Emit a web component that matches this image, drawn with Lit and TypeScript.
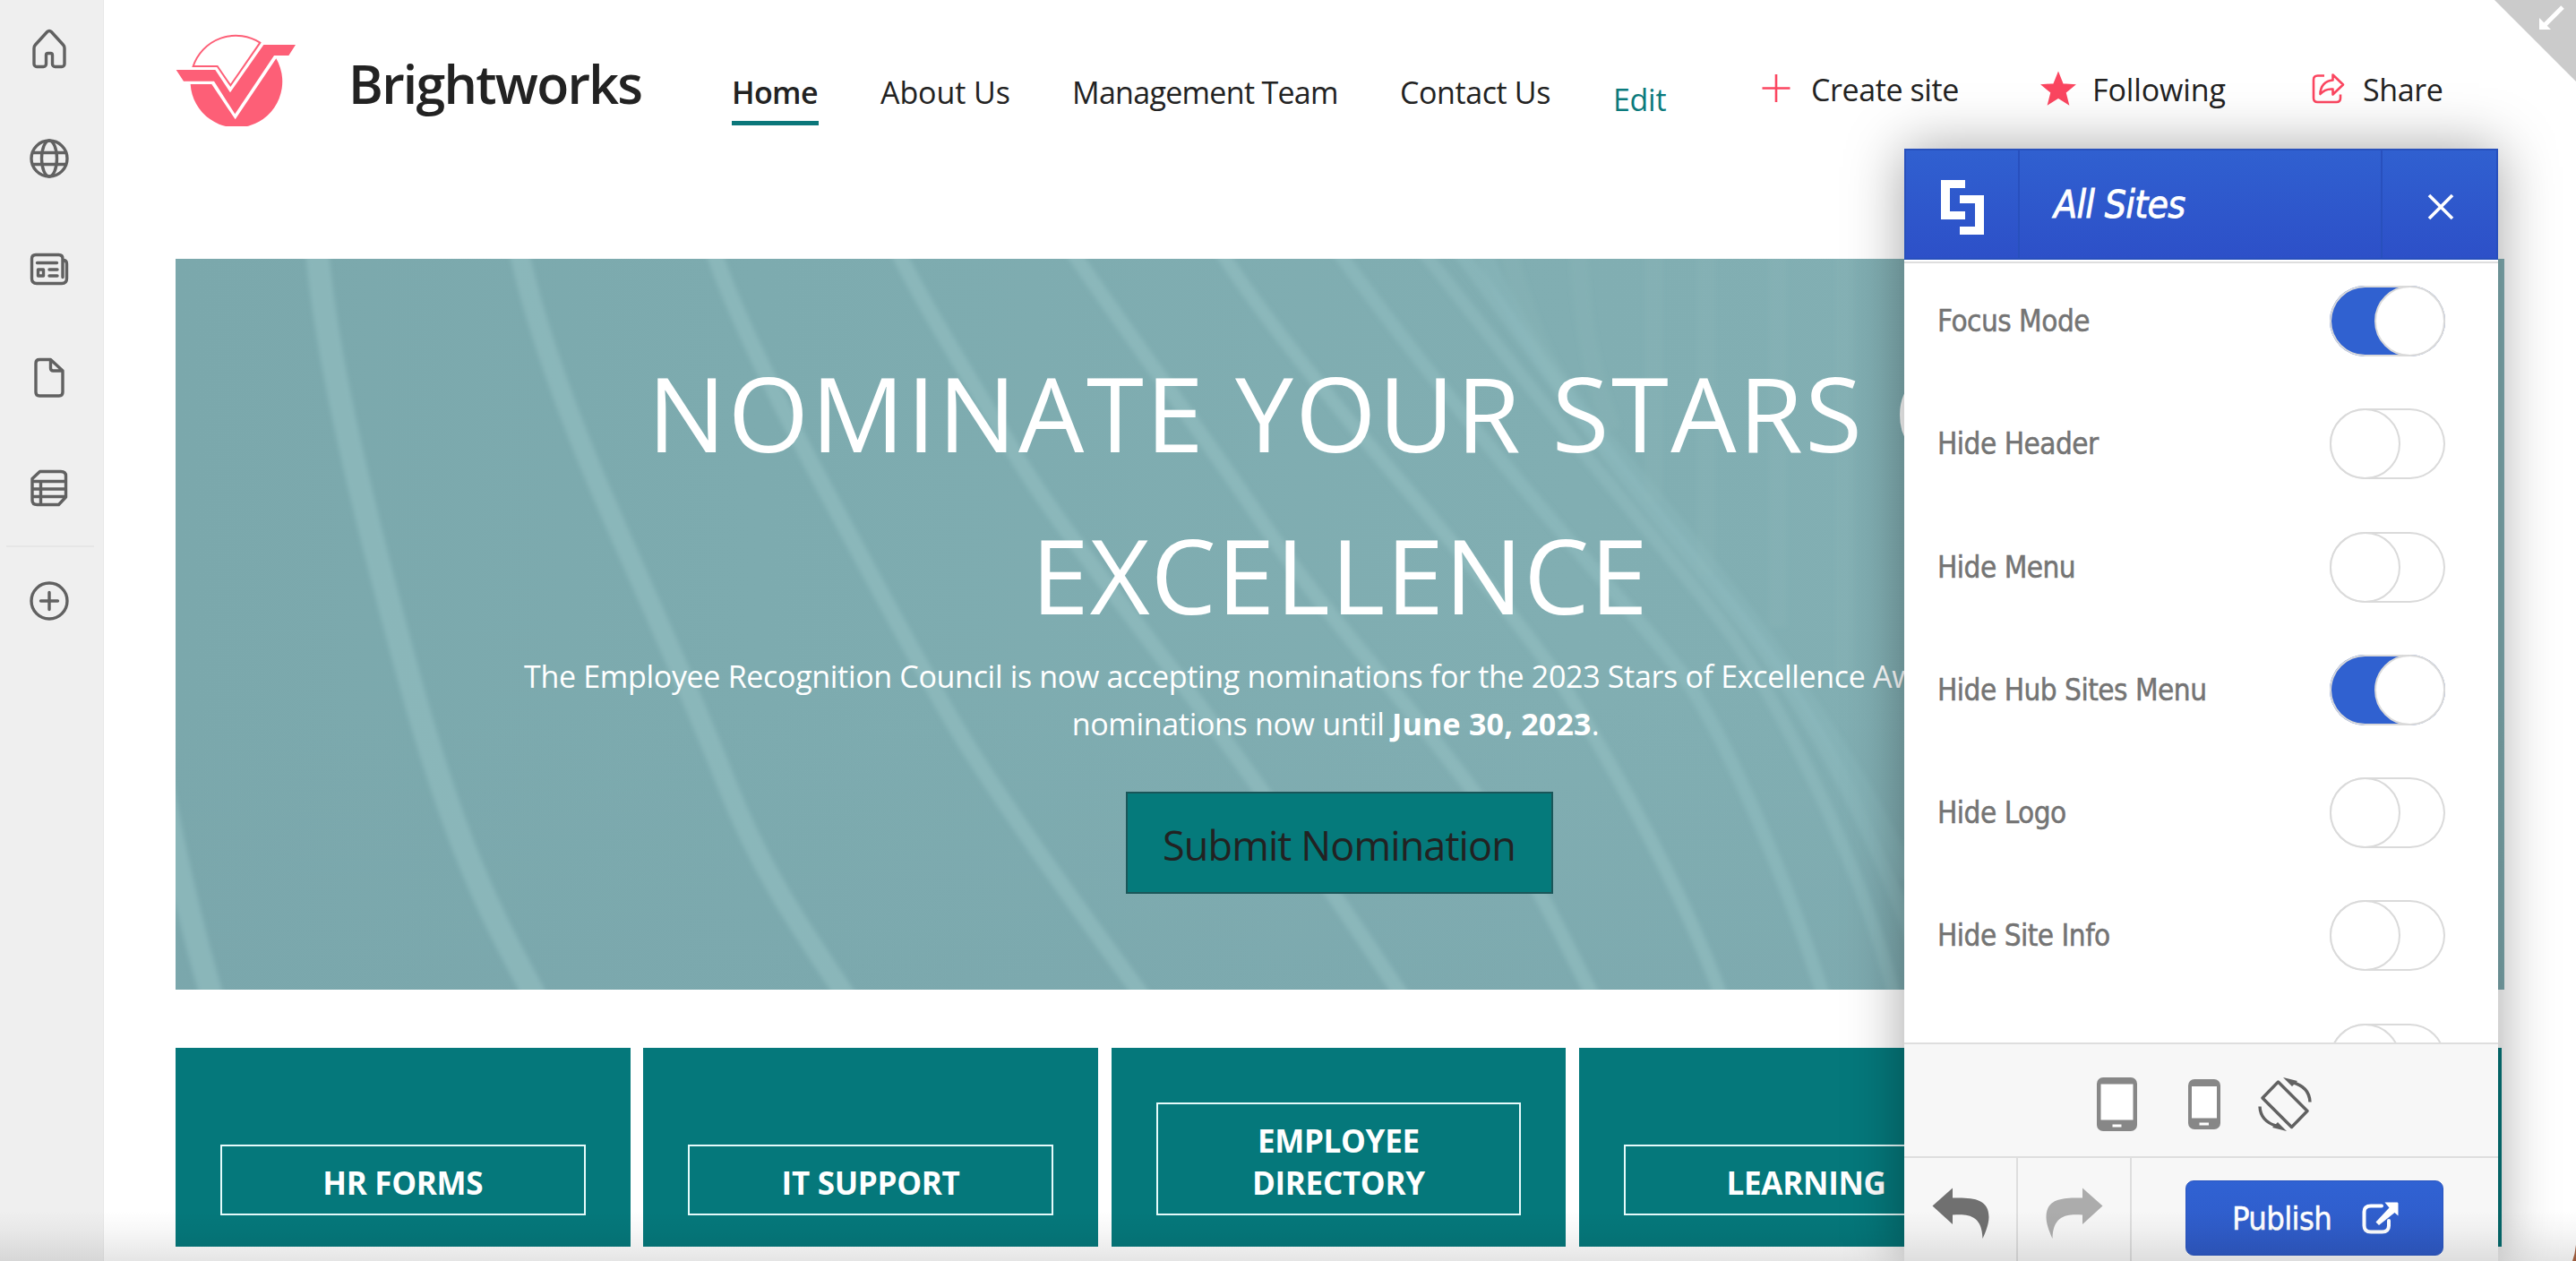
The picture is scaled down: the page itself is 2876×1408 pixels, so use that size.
import { LitElement, html, css, svg, nothing } from 'lit';
import { customElement, property, state } from 'lit/decorators.js';
import { classMap } from 'lit/directives/class-map.js';

const railIcons = [
  // home
  svg`<path d="M25 4.5c-.9 0-1.700.4-2.300 1L9.500 20c-.9 1-1.500 2.300-1.500 3.700V41.500c0 1.700 1.300 3 3 3h7.500c1.700 0 3-1.300 3-3V31.500c0-1.100.9-2 2-2h3c1.100 0 2 .9 2 2v10c0 1.700 1.300 3 3 3H39c1.700 0 3-1.300 3-3V23.700c0-1.400-.5-2.700-1.500-3.700L27.300 5.500c-.6-.6-1.400-1-2.300-1z"/>`,
  // globe
  svg`<circle cx="25" cy="25" r="20"/><ellipse cx="25" cy="25" rx="8.500" ry="20"/><path d="M6.500 18.500h37M6.500 31.500h37"/>`,
  // news
  svg`<path d="M40 15.500h.5c2.500 0 4 1.500 4 4V36c0 3.500-2 5.500-5.500 5.500H11c-3.500 0-5.500-2-5.500-5.500V14c0-3 1.800-4.500 4.500-4.500h25.500c3 0 4.500 1.700 4.500 4.500v20.500"/><path d="M11.500 18.500h22M25 26h9M25 33h9M12.500 26h6v7h-6z"/>`,
  // page
  svg`<path d="M14 4.500h12.500L40 17v24c0 2.500-1.500 4-4 4H14c-2.500 0-4-1.500-4-4V8.500c0-2.500 1.500-4 4-4zM26.500 5v9c0 2 1 3 3 3H40"/>`,
  // list
  svg`<path d="M14.500 6.500H38c3.500 0 5.500 2 5.500 5v23.500l-8 8.500h-24c-3.500 0-5.500-2-5.500-5V14.500zM6 17.500h37M6 26h37M6 34.500h37M15.500 17.500v26"/>`,
];

const navItems = [
  { label: 'Home', cls: 'current' },
  { label: 'About Us', cls: 'about' },
  { label: 'Management Team', cls: 'team' },
  { label: 'Contact Us', cls: 'contact' },
];

const settings = [
  { label: 'Focus Mode', on: true },
  { label: 'Hide Header', on: false },
  { label: 'Hide Menu', on: false },
  { label: 'Hide Hub Sites Menu', on: true },
  { label: 'Hide Logo', on: false },
  { label: 'Hide Site Info', on: false },
  { label: '', on: false },
];

const cards = ['HR FORMS', 'IT SUPPORT', 'EMPLOYEE DIRECTORY', 'LEARNING', ''];

@customElement('app-rail')
export class AppRail extends LitElement {
  static styles = css`
    :host {
      display: flex;
      flex-direction: column;
      align-items: center;
      flex: none;
      box-sizing: border-box;
      width: 116px;
      padding-top: 29.500px;
      padding-right: 6px;
      background: #efefef;
      border-right: 1px solid #e8e8e8;
    }

    .icon {
      width: 50px;
      height: 50px;
      margin-bottom: 72.500px;
      fill: none;
      stroke: #616161;
      stroke-width: 3.400;
      stroke-linecap: round;
      stroke-linejoin: round;
    }

    .divider {
      width: 98px;
      height: 2px;
      margin: -33px 0 35px 3px;
      background: #e6e6e6;
      flex: none;
    }
  `;

  render() {
    return html`
      ${railIcons.map((icon) => html`<svg class="icon" viewBox="0 0 50 50">${icon}</svg>`)}
      <div class="divider"></div>
      <svg class="icon" viewBox="0 0 50 50">
        <circle cx="25" cy="25" r="20" />
        <path d="M25 15.500v19M15.500 25h19" />
      </svg>
    `;
  }
}

@customElement('site-header')
export class SiteHeader extends LitElement {
  static styles = css`
    :host {
      display: flex;
      align-items: flex-start;
      height: 289px;
      color: #222;
      font-size: 34px;
      line-height: 40px;
      white-space: nowrap;
    }

    .logo {
      width: 135px;
      height: 104px;
      margin-top: 37px;
      flex: none;
    }

    .brand {
      width: 322px;
      margin: 53px 0 0 58px;
      font-size: 59px;
      line-height: 80px;
      font-weight: 600;
      letter-spacing: -1.750px;
    }

    .nav {
      display: flex;
      gap: 69px;
      margin: 83px 0 0 106px;
    }

    .current {
      width: 97px;
      padding-bottom: 12px;
      border-bottom: 5px solid #0b777a;
      font-weight: 600;
      letter-spacing: -0.6px;
    }

    .about {
      width: 145px;
      letter-spacing: -0.1px;
    }

    .team {
      width: 297px;
      letter-spacing: -0.7px;
    }

    .contact {
      width: 169px;
      letter-spacing: -0.4px;
    }

    .edit {
      width: 60px;
      padding-top: 8px;
      letter-spacing: -0.3px;
      color: #0b7a7c;
    }

    .actions {
      display: flex;
      margin: 79.500px 0 0 102px;
    }

    .action {
      display: flex;
      letter-spacing: -0.4px;
    }

    .action svg {
      width: 40px;
      height: 40px;
      margin-top: -1px;
      flex: none;
      fill: none;
      stroke: #fb4660;
      stroke-width: 2.600;
    }

    .create {
      width: 315px;
      gap: 19px;
    }

    .following {
      width: 301px;
      gap: 18px;
      letter-spacing: -0.1px;
    }

    .following svg {
      fill: #fb4660;
    }

    .share {
      gap: 19px;
    }
  `;

  render() {
    return html`
      <svg class="logo" viewBox="48 38 405 312">
        <path fill="none" stroke="#fd5f77" stroke-width="6" d="M107 149H188L232 213L331 70A151 151 0 0 0 107 149z" />
        <path fill="#fd5f77" d="M50 161H181L231 237L343 77H450L427 113H378L247 309L177 199H75z" />
        <path fill="#fd5f77" d="M98 209H169L248 327L385 123A154 154 0 1 1 98 209z" />
      </svg>
      <div class="brand">Brightworks</div>
      <nav class="nav">
        ${navItems.map((item) => html`<div class=${item.cls}>${item.label}</div>`)}
        <div class="edit">Edit</div>
      </nav>
      <div class="actions">
        <div class="action create">
          <svg viewBox="0 0 40 40"><path d="M20 4v31M4.500 19.500h31" /></svg>
          <span>Create site</span>
        </div>
        <div class="action following">
          <svg viewBox="0 0 40 40">
            <path d="M20 4l4.600 11.500 12 .8-9.300 7.700 3 11.800L20 29.300 9.700 35.800l3-11.800L3.400 16.300l12-.8z" />
          </svg>
          <span>Following</span>
        </div>
        <div class="action share">
          <svg viewBox="0 0 40 40">
            <path d="M16 5.500H8.500C5.500 5.500 4 7 4 10v20.500c0 3 1.500 4.500 4.500 4.500h21c3 0 4.500-1.500 4.500-4.500v-4" />
            <path d="M25.500 4.500L37 15.500L25.500 26.500v-6c-6-.5-10.500 1.500-14 5.500 0-9 5.500-15 14-15.500z" stroke-linejoin="round" />
          </svg>
          <span>Share</span>
        </div>
      </div>
    `;
  }
}

@customElement('hero-banner')
export class HeroBanner extends LitElement {
  static styles = css`
    :host {
      display: grid;
      grid-template: 816px / 2600px;
      overflow: hidden;
      color: #fff;
    }

    .art,
    .content {
      grid-area: 1 / 1;
    }

    .art {
      width: 2600px;
      height: 816px;
    }

    .content {
      display: flex;
      flex-direction: column;
      align-items: center;
      position: relative;
      padding-top: 81px;
      white-space: nowrap;
      text-align: center;
    }

    .title {
      margin: 0;
      font-size: 116px;
      font-weight: 400;
      line-height: 181px;
      letter-spacing: 2.500px;
    }

    .second {
      letter-spacing: 1px;
    }

    .text {
      margin: -3px 10px 0 0;
      font-size: 34px;
      line-height: 53px;
      letter-spacing: -0.320px;
    }

    .first {
      padding-left: 17px;
    }

    .text b {
      letter-spacing: 0.200px;
    }

    .button {
      box-sizing: border-box;
      width: 477px;
      height: 114px;
      margin: 49px 2px 0 0;
      border: 2px solid #1a5659;
      background: #057a7b;
      color: #222;
      font-size: 45px;
      line-height: 116px;
      letter-spacing: -0.900px;
    }
  `;

  render() {
    return html`
      <svg class="art" viewBox="196 289 2600 816">
        <defs>
          <linearGradient id="base">
            <stop offset="0" stop-color="#7ba8ac" />
            <stop offset="0.25" stop-color="#7dabaf" />
            <stop offset="0.6" stop-color="#81aeb2" />
            <stop offset="1" stop-color="#83b0b4" />
          </linearGradient>
          <linearGradient id="lower" x1="0" y1="0" x2="0" y2="1">
            <stop offset="0.6" stop-color="#7aa6ac" stop-opacity="0" />
            <stop offset="1" stop-color="#7aa6ac" stop-opacity="0.5" />
          </linearGradient>
          <filter id="soft" x="-5%" y="-5%" width="110%" height="110%"><feGaussianBlur stdDeviation="2.500" /></filter>
        </defs>
        <rect x="196" y="289" width="2600" height="816" fill="url(#base)" />
        <rect x="196" y="289" width="2600" height="816" fill="url(#lower)" />
        <g fill="none" stroke="#90bcbf" stroke-opacity="0.700" filter="url(#soft)">
          <path stroke-width="26" d="M176 850Q200 990 240 1125" />
          <path stroke-width="26" d="M353 270C362 380 392 520 454 747S560 1040 604 1125" />
          <path stroke-width="22" d="M577 270C596 360 632 460 682 574S770 770 810 872S890 1030 953 1125" />
          <path stroke-width="18" d="M793 270C815 340 870 450 910 525S1040 770 1084 839S1200 1010 1285 1125" />
          <path stroke-width="17" d="M997 270C1025 330 1075 410 1134 508S1300 730 1404 877S1520 1045 1574 1125" />
          <path stroke-width="16" d="M1190 270C1235 340 1340 480 1410 584S1560 770 1640 877S1740 1040 1785 1125" />
          <path stroke-width="15" d="M1356 270C1400 340 1480 440 1557 530S1700 700 1736 752S1880 990 1926 1125" />
          <path stroke-width="15" stroke-opacity="0.600" d="M1486 270C1540 345 1610 435 1685 525S1820 680 1870 742S1995 980 2040 1125" />
          <path stroke-width="14" stroke-opacity="0.550" d="M1580 270C1640 345 1690 410 1748 481S1890 650 1933 709S2080 960 2118 1125" />
          <path stroke-width="16" stroke-opacity="0.500" d="M1622 270C1680 350 1740 430 1793 503S1940 680 1984 747S2090 920 2140 1060" />
          <path stroke-width="18" stroke-opacity="0.300" d="M1655 280C1690 360 1740 430 1800 500S1950 680 2010 770S2100 910 2130 980" />
          <path stroke-width="20" stroke-opacity="0.180" d="M1682 270Q1705 370 1750 440M1762 270Q1765 390 1800 480M1846 270V560M1905 270V640M1985 270V700M2060 270V760" />
        </g>
      </svg>
      <div class="content">
        <h1 class="title">NOMINATE YOUR STARS OF<br /><span class="second">EXCELLENCE</span></h1>
        <div class="text">
          <span class="first">The Employee Recognition Council is now accepting nominations for the 2023 Stars of Excellence Awards. Submit your</span><br />
          nominations now until <b>June 30, 2023</b>.
        </div>
        <div class="button">Submit Nomination</div>
      </div>
    `;
  }
}

@customElement('card-row')
export class CardRow extends LitElement {
  static styles = css`
    :host {
      display: grid;
      grid-template-columns: repeat(5, 507.500px);
      gap: 14.800px;
      margin-top: 65px;
    }

    .card {
      display: flex;
      flex-direction: column;
      justify-content: flex-end;
      box-sizing: border-box;
      height: 222px;
      padding: 0 50px 35px;
      background: #05787b;
    }

    .label {
      padding: 17px 80px 11px;
      border: 2px solid #e6fbfb;
      color: #fff;
      font-size: 35px;
      line-height: 47px;
      font-weight: 700;
      letter-spacing: -0.300px;
      text-align: center;
    }
  `;

  render() {
    return cards.map(
      (card) => html`<div class="card">${card ? html`<div class="label">${card}</div>` : nothing}</div>`,
    );
  }
}

@customElement('toggle-switch')
export class ToggleSwitch extends LitElement {
  static styles = css`
    :host {
      display: block;
      flex: none;
    }

    .track {
      display: flex;
      box-sizing: border-box;
      width: 129px;
      height: 79px;
      border-radius: 40px;
      box-shadow: inset 0 0 0 2px #dadada;
      background: #fff;
    }

    .knob {
      box-sizing: border-box;
      width: 79px;
      height: 79px;
      border: 2px solid #dadada;
      border-radius: 50%;
      background: #fff;
    }

    .on {
      justify-content: flex-end;
      background: #3061d0;
    }
  `;

  @property({ type: Boolean }) on = false;

  render() {
    return html`<div class=${classMap({ track: true, on: this.on })}><div class="knob"></div></div>`;
  }
}

@customElement('settings-panel')
export class SettingsPanel extends LitElement {
  static styles = css`
    :host {
      display: flex;
      flex-direction: column;
      width: 663px;
      height: 1242px;
      background: #fff;
      box-shadow: 0 0 60px rgba(0, 0, 0, 0.36);
      font-family: 'DejaVu Sans Condensed', 'DejaVu Sans', sans-serif;
    }

    .header {
      display: grid;
      grid-template-columns: 125px 1fr 127px;
      box-sizing: border-box;
      height: 124px;
      flex: none;
      border: 2px solid #2850bd;
      background: linear-gradient(#3060d0, #2d50c8);
      color: #fff;
    }

    .header > * {
      display: flex;
      align-items: center;
    }

    .mark,
    .close {
      justify-content: center;
    }

    .mark svg {
      width: 48px;
      height: 61px;
      margin-top: 6px;
      fill: #fff;
    }

    .title {
      padding: 0 0 0 38px;
      border: solid #2850bd;
      border-width: 0 2px;
      font-size: 42.500px;
      font-style: italic;
      letter-spacing: -0.700px;
      -webkit-text-stroke: 0.8px #fff;
    }

    .close svg {
      width: 30px;
      height: 30px;
      margin: 5px 0 0 2px;
      fill: none;
      stroke: #fff;
      stroke-width: 3.600;
    }

    .list {
      flex: 1;
      min-height: 0;
      overflow: hidden;
      margin-top: 2px;
      border-top: 2px solid #dedede;
    }

    .row {
      display: flex;
      justify-content: space-between;
      align-items: flex-start;
      height: 137.300px;
      padding: 0 59px 0 37px;
      color: #747474;
      font-size: 33px;
      line-height: 80px;
      letter-spacing: -0.500px;
      -webkit-text-stroke: 0.5px #747474;
    }

    .row:first-child {
      margin-top: 25px;
    }

    .devices {
      display: flex;
      justify-content: center;
      align-items: center;
      box-sizing: border-box;
      height: 127px;
      flex: none;
      border-top: 2px solid #dedede;
      background: #f7f7f7;
      padding: 9px 0 0 7px;
    }

    .tablet {
      width: 45px;
      height: 60px;
    }

    .phone {
      width: 36px;
      height: 56px;
      margin: 0 42px 0 57px;
    }

    .rotate {
      width: 60px;
      height: 60px;
    }

    .footer {
      display: grid;
      grid-template-columns: 127px 127px 1fr;
      height: 115px;
      flex: none;
      border-top: 2px solid #dedede;
      background: #f7f7f7;
    }

    .history {
      display: flex;
      justify-content: center;
      box-sizing: border-box;
      border-right: 2px solid #dedede;
      padding-top: 33px;
    }

    .history svg {
      width: 64px;
      height: 57px;
      fill: #707070;
    }

    .history .redo {
      transform: scaleX(-1);
      fill: #acacac;
    }

    .publish {
      display: flex;
      align-items: center;
      justify-self: end;
      box-sizing: border-box;
      width: 288px;
      height: 84px;
      margin: 25px 61px 0 0;
      padding-left: 51px;
      border: 1px solid #2a55c0;
      border-radius: 9px;
      background: linear-gradient(#3062d3, #2f5ac6);
      color: #fff;
      font-size: 36px;
      letter-spacing: -0.600px;
      -webkit-text-stroke: 0.5px #fff;
    }

    .publish svg {
      width: 41px;
      height: 36px;
      margin-left: 34px;
    }
  `;

  @state() private items = settings;

  private toggle(index: number) {
    this.items = this.items.map((item, i) => (i === index ? { ...item, on: !item.on } : item));
  }

  render() {
    const arrow = svg`<path d="M23 0.500L0.500 20.500L23 41V30.500C38 29.500 56 29 56.500 57C58 54 63.500 42 63.500 33C63.500 12 45 11 23 11.500z" stroke-linejoin="round" />`;
    return html`
      <div class="header">
        <div class="mark">
          <svg viewBox="0 0 48 61"><path d="M0 0H27V9H10V35H27V44H0zM21 17H48V61H21V52H38V26H21z" /></svg>
        </div>
        <div class="title">All Sites</div>
        <div class="close"><svg viewBox="0 0 30 30"><path d="M2 2L28 28M28 2L2 28" /></svg></div>
      </div>
      <div class="list">
        ${this.items.map(
          (item, i) => html`
            <div class="row">
              <span>${item.label}</span>
              <toggle-switch ?on=${item.on} @click=${() => this.toggle(i)}></toggle-switch>
            </div>
          `,
        )}
      </div>
      <div class="devices">
        <svg class="tablet" viewBox="0 0 45 60">
          <rect width="45" height="60" rx="7" fill="#878787" />
          <path fill="#fff" d="M4.500 7.500h36v40h-36zM17.500 52.500h10v3h-10z" />
        </svg>
        <svg class="phone" viewBox="0 0 36 56">
          <rect width="36" height="56" rx="7" fill="#878787" />
          <path fill="#fff" d="M4 8h28v35.500H4zM12.500 48.500h10.500v3H12.500z" />
        </svg>
        <svg class="rotate" viewBox="0 0 60 60">
          <g fill="none" stroke="#616161" stroke-width="3.400">
            <path stroke-linejoin="round" d="M22.500 5L55 37.500L37.500 55.500L5 23z" />
            <path d="M38 5.500C50 8.500 57.500 16 58 27.500M22 54.500C10 51.500 2.500 44 2 32.500" />
          </g>
          <path fill="#616161" d="M28 0L44 4L38 10zM32 60L16 56L22 50z" />
        </svg>
      </div>
      <div class="footer">
        <div class="history"><svg viewBox="0 0 64 57">${arrow}</svg></div>
        <div class="history"><svg class="redo" viewBox="0 0 64 57">${arrow}</svg></div>
        <div class="publish">
          Publish
          <svg viewBox="0 0 41 36">
            <path fill="none" stroke="#fff" stroke-width="4" stroke-linecap="round" d="M22 4.500H10C5 4.500 2.500 6.500 2.500 11V26.500C2.500 31.500 5 33.500 10 33.500H22.500C27.500 33.500 30 31.500 30 26.500V21" />
            <path fill="#fff" d="M25.500 0.500H39C40 0.500 40.500 1 40.500 2V15.500L36.500 12L19 26L15.500 22.500L30.500 6.500z" />
          </svg>
        </div>
      </div>
    `;
  }
}

@customElement('app-root')
export class AppRoot extends LitElement {
  static styles = css`
    :host {
      display: flex;
      position: relative;
      height: 1408px;
      overflow: hidden;
      background: #fff;
      font-family: 'Open Sans', 'Noto Sans', sans-serif;
    }

    .page {
      flex: none;
      width: 2600px;
      margin-left: 80px;
    }

    .corner {
      position: absolute;
      top: 0;
      right: 0;
      width: 91px;
      height: 91px;
    }

    .panel {
      position: absolute;
      top: 166px;
      left: 2126px;
    }

    .fade {
      position: absolute;
      left: 0;
      right: 0;
      bottom: 0;
      height: 56px;
      background: linear-gradient(rgba(0, 0, 0, 0), rgba(0, 0, 0, 0.03) 40%, rgba(0, 0, 0, 0.1));
      pointer-events: none;
    }

    .edge {
      position: absolute;
      right: 0;
      bottom: 0;
      width: 4px;
      height: 18px;
    }
  `;

  render() {
    return html`
      <app-rail></app-rail>
      <main class="page">
        <site-header></site-header>
        <hero-banner></hero-banner>
        <card-row></card-row>
      </main>
      <svg class="corner" viewBox="0 0 91 91">
        <path fill="#cbcbcb" d="M0 0H91V91z" />
        <path fill="none" stroke="#fff" stroke-width="5" d="M76 8L54 30" />
        <path fill="#fff" d="M50 20V33H63z" />
      </svg>
      <settings-panel class="panel"></settings-panel>
      <div class="fade"></div>
      <svg class="edge" viewBox="0 0 4 18"><path fill="#9a5a3c" d="M4 0V18H0Q3 10 4 0z" /></svg>
    `;
  }
}
